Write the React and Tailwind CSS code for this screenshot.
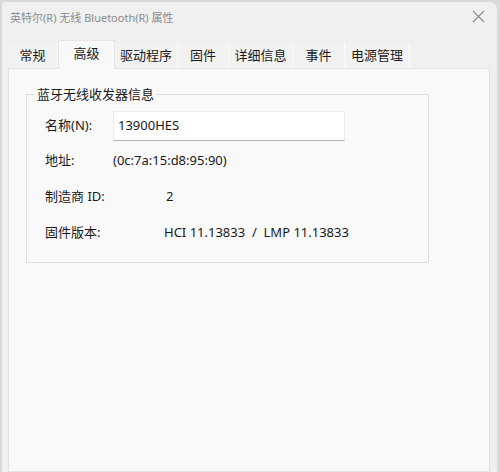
import React from 'react';

const font = { fontFamily: '"Segoe UI", "Noto Sans", "Noto Sans CJK SC", sans-serif' };

const tabs = [
  { label: '常规', w: 'w-[50px]' },
  { label: '高级', w: 'w-[57px]', active: true },
  { label: '驱动程序', w: 'w-[63px]' },
  { label: '固件', w: 'w-[51px]' },
  { label: '详细信息', w: 'w-[64px]' },
  { label: '事件', w: 'w-[52px]' },
  { label: '电源管理', w: 'w-[65px]' },
];

function Row({ label, value, gap }) {
  return (
    <div className="flex items-center h-[36px]">
      <span className="w-[68px] shrink-0">{label}</span>
      <span className={gap}>{value}</span>
    </div>
  );
}

function App() {
  return (
    <div className="w-[500px] h-[472px] bg-[#d9d9d9] pl-[2px] pt-[2px] pr-[3px] text-[13px] text-[#1a1a1a] overflow-hidden" style={font}>
      <div className="h-full bg-[#f0f0f0] rounded-tr-[8px] rounded-tl-[4px] flex flex-col">
        {/* title bar */}
        <div className="h-[37px] flex items-start justify-between pt-[8px] pl-[8px] pr-[12px] shrink-0">
          <span className="text-[#8c8c8c] text-[11px] leading-[16px]">英特尔(R) 无线 Bluetooth(R) 属性</span>
          <svg width="13" height="13" viewBox="0 0 13 13" className="text-[#8c8c8c]">
            <path d="M1 1 L12 12 M12 1 L1 12" stroke="currentColor" strokeWidth="1.1" fill="none" />
          </svg>
        </div>

        {/* tabs */}
        <div className="flex items-end h-[29px] pl-[6px] shrink-0">
          {tabs.map((t) =>
            t.active ? (
              <div key={t.label} className={`${t.w} h-[29px] bg-[#f9f9f9] flex items-start pt-[3px] justify-center border-x border-t border-[#e5e5e5] -mb-px relative z-10`}>
                {t.label}
              </div>
            ) : (
              <div key={t.label} className={`${t.w} h-[25px] bg-[#f2f2f2] flex items-center justify-center border-r border-[#fafafa]`}>
                {t.label}
              </div>
            )
          )}
        </div>

        {/* panel */}
        <div className="flex-1 ml-[6px] mr-[7px] bg-[#f9f9f9] border border-[#e3e3e3] pt-[25px] pl-[17px]">
          <div className="relative w-[403px] h-[169px] border border-[#dedede] pl-[18px] pt-[16px]">
            <span className="absolute -top-[11px] left-[8px] px-[2px] bg-[#f9f9f9] leading-[20px]">蓝牙无线收发器信息</span>
            <div className="flex items-center h-[30px]">
              <span className="w-[68px] shrink-0">名称(N):</span>
              <div className="w-[232px] h-[30px] bg-white border border-[#ececec] border-b-[#b0b0b0] flex items-center pl-[4px]">13900HES</div>
            </div>
            <div className="mt-[2px]">
              <Row label="地址:" value="(0c:7a:15:d8:95:90)" gap="" />
              <Row label="制造商 ID:" value="2" gap="ml-[53px]" />
              <Row label="固件版本:" value="HCI 11.13833  /  LMP 11.13833" gap="ml-[51px] whitespace-pre" />
            </div>
          </div>
        </div>
      </div>
    </div>
  );
}

export default App;
